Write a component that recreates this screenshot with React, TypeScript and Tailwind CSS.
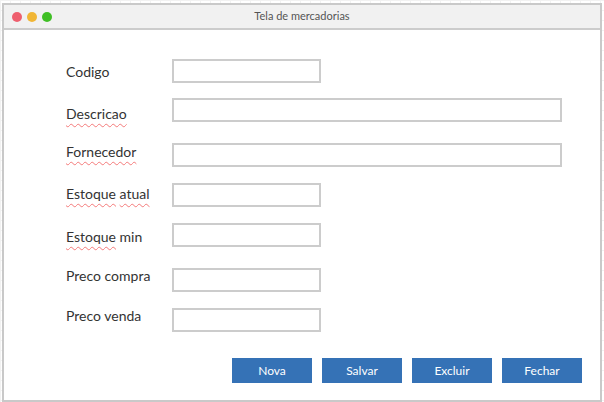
import React from "react";

const Wavy = ({ children }: { children: React.ReactNode }) => (
  <span className="underline decoration-wavy decoration-[#f47a7a] decoration-1 underline-offset-[4px]">
    {children}
  </span>
);

type Row = {
  label: React.ReactNode;
  wide?: boolean;
  mt: string;
  labelMt: string;
  inputMt: string;
};

const rows: Row[] = [
  { label: "Codigo", mt: "mt-[29px]", labelMt: "mt-[4px]", inputMt: "mt-0" },
  { label: <Wavy>Descricao</Wavy>, wide: true, mt: "mt-[14px]", labelMt: "mt-[7px]", inputMt: "mt-0" },
  { label: <Wavy>Fornecedor</Wavy>, wide: true, mt: "mt-[20px]", labelMt: "mt-0", inputMt: "mt-0" },
  {
    label: (
      <>
        <Wavy>Estoque</Wavy> <Wavy>atual</Wavy>
      </>
    ),
    mt: "mt-[15px]",
    labelMt: "mt-[2px]",
    inputMt: "mt-0",
  },
  {
    label: (
      <>
        <Wavy>Estoque</Wavy> min
      </>
    ),
    mt: "mt-[15px]",
    labelMt: "mt-[5px]",
    inputMt: "mt-0",
  },
  { label: "Preco compra", mt: "mt-[19px]", labelMt: "mt-0", inputMt: "mt-[1px]" },
  { label: "Preco venda", mt: "mt-[15px]", labelMt: "mt-0", inputMt: "mt-[1px]" },
];

const buttons = ["Nova", "Salvar", "Excluir", "Fechar"];

export default function App() {
  return (
    <div
      className="w-[604px] h-[402px] overflow-hidden bg-white bg-[linear-gradient(#f2f2f2_1px,transparent_1px),linear-gradient(90deg,#f2f2f2_1px,transparent_1px)] bg-[size:10px_10px] pl-[2px] pt-[3px]"
      style={{ fontFamily: "Lato, 'Open Sans', sans-serif" }}
    >
      <div className="w-[600px] h-[399px] border-2 border-[#c9c9c9] bg-white flex flex-col">
        <div className="relative h-[25px] shrink-0 bg-[#f1f1f1] border-b-2 border-[#cccccc] flex items-center">
          <div className="flex items-center gap-[5px] pl-[8px]">
            <span className="w-[10px] h-[10px] rounded-full bg-[#ee5f6e]" />
            <span className="w-[10px] h-[10px] rounded-full bg-[#f1b635]" />
            <span className="w-[10px] h-[10px] rounded-full bg-[#3fbf25]" />
          </div>
          <div className="absolute inset-0 flex items-center justify-center text-[11px] text-[#555555]">
            Tela de mercadorias
          </div>
        </div>
        <div className="flex flex-col pl-[62px]">
          {rows.map((r, i) => (
            <div key={i} className={`flex items-start h-[25px] ${r.mt}`}>
              <div
                className={`w-[106px] shrink-0 text-[14px] leading-[17px] text-[#333333] whitespace-nowrap ${r.labelMt}`}
              >
                {r.label}
              </div>
              <div
                className={`h-[24px] border-2 border-[#cccccc] bg-white ${r.wide ? "w-[390px]" : "w-[149px]"} ${r.inputMt}`}
              />
            </div>
          ))}
        </div>
        <div className="flex justify-end gap-[10px] pr-[18px] mt-[26px]">
          {buttons.map((b) => (
            <div
              key={b}
              className="w-[80px] h-[25px] bg-[#3572b6] text-white text-[12px] flex items-center justify-center"
            >
              {b}
            </div>
          ))}
        </div>
      </div>
    </div>
  );
}
